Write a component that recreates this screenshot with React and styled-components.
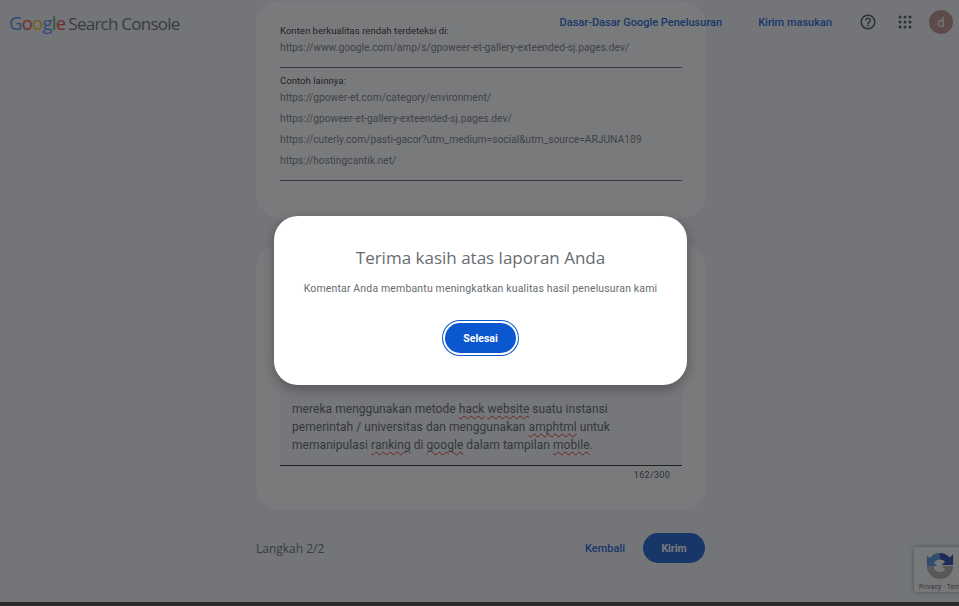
import React from "react";
import styled, { createGlobalStyle } from "styled-components";

const Global = createGlobalStyle`
  html, body { margin: 0; padding: 0; height: 606px; overflow: hidden; background: #2b2b2c; }
  * { box-sizing: border-box; }
  body { font-family: Roboto, "Liberation Sans", sans-serif; }
`;

const Page = styled.div`
  position: relative;
  width: 959px;
  height: 602px;
  overflow: hidden;
  background: #eff3f8;
`;

const Header = styled.header`
  position: absolute;
  inset: 0 0 auto 0;
  height: 44px;
  display: flex;
  align-items: center;
  padding: 0 6px 0 9px;
`;

const Logo = styled.div`
  display: flex;
  align-items: baseline;
  gap: 3px;
  font-family: "Open Sans", sans-serif;
  font-size: 17px;
  letter-spacing: -0.75px;
  color: #5f6368;
  margin-right: auto;
`;

const Letter = styled.span`
  color: ${(p) => p.$c};
  font-size: 18.5px;
`;

const HeadLink = styled.a`
  font-size: 11px;
  font-weight: 500;
  color: #0b57d0;
  margin-left: ${(p) => p.$ml}px;
`;

const IconSlot = styled.div`
  display: flex;
  align-items: center;
  justify-content: center;
  margin-left: ${(p) => p.$ml}px;
  color: #444746;
`;

const Avatar = styled.div`
  width: 24px;
  height: 24px;
  margin-left: 15px;
  border-radius: 50%;
  background: #b98982;
  color: #fff;
  font-size: 13px;
  display: flex;
  align-items: center;
  justify-content: center;
`;

const Column = styled.main`
  width: 450px;
  margin-left: 256px;
  padding-top: 1px;
  display: flex;
  flex-direction: column;
`;

const Card = styled.section`
  background: #fff;
  border-radius: 24px;
  height: ${(p) => p.$h}px;
  margin-bottom: ${(p) => p.$mb}px;
  padding: 0 24px;
  display: flex;
  flex-direction: column;
`;

const Label = styled.div`
  font-size: 9.5px;
  line-height: 12px;
  color: #1f1f1f;
  margin-top: ${(p) => p.$mt}px;
  letter-spacing: 0.05px;
`;

const Url = styled.div`
  font-size: 10.25px;
  line-height: 21px;
  color: #70757a;
  white-space: nowrap;
`;

const Rule = styled.hr`
  width: 100%;
  margin: ${(p) => p.$m};
  border: 0;
  border-top: 1px solid #5f6368;
`;

const Field = styled.div`
  margin-top: auto;
  background: #f6f8fb;
  padding: 12px 12px 11px;
  border-bottom: 1px solid #1f1f1f;
  font-size: 12px;
  line-height: 18px;
  letter-spacing: 0.05px;
  color: #53575b;
`;

const Typo = styled.span`
  text-decoration: underline wavy #e02020 1px;
  text-underline-offset: 2px;
`;

const Counter = styled.div`
  text-align: right;
  font-size: 9px;
  letter-spacing: 0.3px;
  color: #444746;
  padding: 4px 12px 30px;
`;

const Footer = styled.footer`
  height: 30px;
  display: flex;
  align-items: center;
  padding-right: 1px;
`;

const Step = styled.div`
  font-family: "Open Sans", sans-serif;
  font-size: 12px;
  color: #5f6368;
  margin-right: auto;
`;

const TextButton = styled.a`
  font-size: 11px;
  font-weight: 500;
  color: #0b57d0;
  margin-right: 18px;
`;

const PrimaryButton = styled.button`
  border: 0;
  padding: 0;
  width: ${(p) => p.$w}px;
  height: 30px;
  border-radius: 15px;
  background: #0b57d0;
  color: #fff;
  font-family: Roboto, sans-serif;
  font-size: 10.5px;
  font-weight: 700;
  ${(p) => p.$ring && "box-shadow: 0 0 0 2px #fff, 0 0 0 3px #0b57d0;"}
`;

const Recaptcha = styled.div`
  position: absolute;
  left: 914px;
  top: 547px;
  width: 80px;
  height: 45px;
  border-radius: 2px;
  background: #f9f9f9;
  box-shadow: 0 0 5px rgba(0, 0, 0, 0.4);
  overflow: hidden;
  padding-left: 12px;
`;

const RecaptchaIcon = styled.svg`
  display: block;
  margin-top: 5px;
`;

const RecaptchaText = styled.div`
  position: absolute;
  left: 5px;
  top: 36px;
  font-size: 6.5px;
  letter-spacing: 0.2px;
  color: #555;
  white-space: nowrap;
`;

const Overlay = styled.div`
  position: absolute;
  inset: 0;
  background: rgba(32, 33, 36, 0.6);
  display: flex;
  align-items: center;
  justify-content: center;
  padding: 0 0 1px 2px;
`;

const Dialog = styled.div`
  width: 413px;
  height: 169px;
  background: #fff;
  border-radius: 24px;
  box-shadow: 0 4px 12px rgba(0, 0, 0, 0.3);
  display: flex;
  flex-direction: column;
  align-items: center;
  padding-top: 29px;
`;

const Title = styled.h2`
  margin: 0;
  font-family: "Open Sans", sans-serif;
  font-weight: 400;
  font-size: 17px;
  line-height: 26px;
  color: #686c71;
`;

const Sub = styled.p`
  margin: 11px 0 27px;
  font-size: 10.5px;
  line-height: 14px;
  letter-spacing: 0.15px;
  color: #686c71;
`;

const Strip = styled.div`
  height: 4px;
  background: #2b2b2c;
`;

const logo = [
  ["G", "#4285f4"], ["o", "#ea4335"], ["o", "#fbbc05"],
  ["g", "#4285f4"], ["l", "#34a853"], ["e", "#ea4335"],
];

export default function App() {
  return (
    <>
      <Global />
      <Page>
        <Column>
          <Card $h={217} $mb={26}>
            <Label $mt={24}>Konten berkualitas rendah terdeteksi di:</Label>
            <Url>https://www.google.com/amp/s/gpoweer-et-gallery-exteended-sj.pages.dev/</Url>
            <Rule $m="9px 0 7px" />
            <Label $mt={0}>Contoh lainnya:</Label>
            <Url>https://gpower-et.com/category/environment/</Url>
            <Url>https://gpoweer-et-gallery-exteended-sj.pages.dev/</Url>
            <Url>https://cuterly.com/pasti-gacor?utm_medium=social&amp;utm_source=ARJUNA189</Url>
            <Url>https://hostingcantik.net/</Url>
            <Rule $m="9px 0 0" />
          </Card>
          <Card $h={266} $mb={23}>
            <Field>
              mereka menggunakan metode <Typo>hack</Typo> <Typo>website</Typo> suatu instansi
              <br />
              pemerintah / universitas dan menggunakan <Typo>amphtml</Typo> untuk
              <br />
              memanipulasi <Typo>ranking</Typo> di <Typo>google</Typo> dalam tampilan <Typo>mobile</Typo>.
            </Field>
            <Counter>162/300</Counter>
          </Card>
          <Footer>
            <Step>Langkah 2/2</Step>
            <TextButton>Kembali</TextButton>
            <PrimaryButton $w={62}>Kirim</PrimaryButton>
          </Footer>
        </Column>
        <Header>
          <Logo>
            <span>
              {logo.map(([l, c], i) => (
                <Letter key={i} $c={c}>{l}</Letter>
              ))}
            </span>
            <span>Search Console</span>
          </Logo>
          <HeadLink $ml={0}>Dasar-Dasar Google Penelusuran</HeadLink>
          <HeadLink $ml={36}>Kirim masukan</HeadLink>
          <IconSlot $ml={27}>
            <svg width="18" height="18" viewBox="0 0 24 24" fill="currentColor">
              <path d="M11 18h2v-2h-2v2zm1-16C6.48 2 2 6.48 2 12s4.48 10 10 10 10-4.48 10-10S17.52 2 12 2zm0 18c-4.41 0-8-3.59-8-8s3.59-8 8-8 8 3.59 8 8-3.59 8-8 8zm0-14c-2.21 0-4 1.79-4 4h2c0-1.1.9-2 2-2s2 .9 2 2c0 2-3 1.75-3 5h2c0-2.25 3-2.5 3-5 0-2.21-1.79-4-4-4z" />
            </svg>
          </IconSlot>
          <IconSlot $ml={19}>
            <svg width="18" height="18" viewBox="0 0 18 18" fill="currentColor">
              {[4, 9, 14].flatMap((y) =>
                [4, 9, 14].map((x) => <circle key={`${x}-${y}`} cx={x} cy={y} r="1.5" />)
              )}
            </svg>
          </IconSlot>
          <Avatar>d</Avatar>
        </Header>
        <Recaptcha>
          <RecaptchaIcon width="28" height="28" viewBox="0 0 30 30">
            <path d="M15 1a14 14 0 0 0-11 5.500L1 3.500V15h11l-3.500-3.500A8 8 0 0 1 15 8z" fill="#4a90e2" />
            <path d="M15 1a14 14 0 0 1 10.500 5L29 2.500V14H17l3.500-3.500A7 7 0 0 0 15 8z" fill="#1c3aa9" />
            <path d="M1 15h7a7.500 7.500 0 0 0 13 4l-4-4h12a14 14 0 0 1-28 0z" fill="#ababab" />
          </RecaptchaIcon>
          <RecaptchaText>Privacy · Terms</RecaptchaText>
        </Recaptcha>
        <Overlay>
          <Dialog>
            <Title>Terima kasih atas laporan Anda</Title>
            <Sub>Komentar Anda membantu meningkatkan kualitas hasil penelusuran kami</Sub>
            <PrimaryButton $w={71} $ring>Selesai</PrimaryButton>
          </Dialog>
        </Overlay>
      </Page>
      <Strip />
    </>
  );
}
